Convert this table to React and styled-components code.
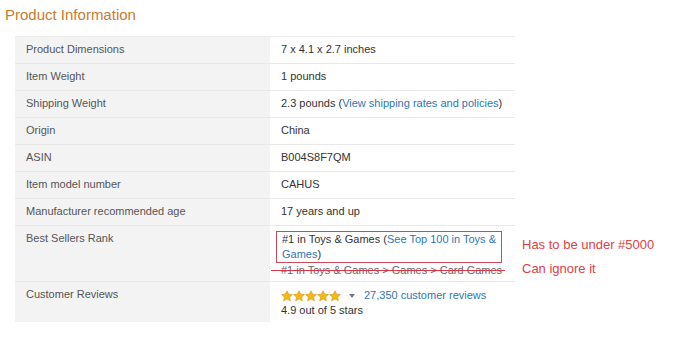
import React from 'react'
import styled, { createGlobalStyle } from 'styled-components'

const GlobalStyle = createGlobalStyle`
  html, body {
    margin: 0;
    background: #fff;
    font-family: "Liberation Sans", Arial, sans-serif;
  }
`

const rows = [
  ['Product Dimensions', '7 x 4.1 x 2.7 inches'],
  ['Item Weight', '1 pounds'],
  ['Shipping Weight', 'shipping'],
  ['Origin', 'China'],
  ['ASIN', 'B004S8F7QM'],
  ['Item model number', 'CAHUS'],
  ['Manufacturer recommended age', '17 years and up'],
]

function Star() {
  return (
    <svg width="12" height="12" viewBox="0 0 24 24">
      <path
        d="M12 1.5l3.2 6.9 7.5.8-5.6 5.1 1.6 7.4L12 17.9l-6.7 3.8 1.6-7.4L1.3 9.2l7.5-.8z"
        fill="#f5b81c"
        stroke="#d8920a"
        strokeWidth="1.2"
      />
    </svg>
  )
}

function App() {
  return (
    <Page>
      <GlobalStyle />
      <Title>Product Information</Title>
      <Table>
        {rows.map(([label, value]) => (
          <Row key={label}>
            <Label>{label}</Label>
            <Value>
              {value === 'shipping' ? (
                <>2.3 pounds (<Link>View shipping rates and policies</Link>)</>
              ) : value}
            </Value>
          </Row>
        ))}
        <Row>
          <Label>Best Sellers Rank</Label>
          <Value tight>
            <RankBox>
              #1 in Toys &amp; Games (<Link>See Top 100 in Toys &amp; Games</Link>)
            </RankBox>
            <Struck>#1 in Toys &amp; Games &gt; Games &gt; Card Games</Struck>
            <Note top={11}>Has to be under #5000</Note>
            <Note top={35}>Can ignore it</Note>
          </Value>
        </Row>
        <Row last>
          <Label>Customer Reviews</Label>
          <Value tight>
            <Reviews>
              <Stars>
                <Star /><Star /><Star /><Star /><Star />
              </Stars>
              <Caret />
              <Link>27,350 customer reviews</Link>
            </Reviews>
            <div>4.9 out of 5 stars</div>
          </Value>
        </Row>
      </Table>
    </Page>
  )
}

export default App

const Page = styled.div`
  padding: 5px 0 0 0;
  width: 680px;
  height: 339px;
  box-sizing: border-box;
`
const Title = styled.h2`
  margin: 0 0 0 5px;
  font-size: 15px;
  font-weight: normal;
  color: #c97a30;
  line-height: 19px;
`
const Table = styled.div`
  margin: 12px 0 0 15px;
  width: 500px;
  border-top: 1px solid #ececec;
`
const Row = styled.div`
  display: grid;
  grid-template-columns: 255px 245px;
  border-bottom: 1px solid ${p => (p.last ? 'transparent' : '#e8e8e8')};
  font-size: 11px;
  line-height: 15px;
`
const Label = styled.div`
  background: #f3f3f3;
  color: #555;
  padding: 5px 11px 6px 11px;
`
const Value = styled.div`
  position: relative;
  color: #333;
  padding: ${p => (p.tight ? '5px 11px 4px 11px' : '5px 11px 6px 11px')};
`
const Link = styled.span`
  color: #2e76b5;
`
const RankBox = styled.div`
  border: 1px solid #d2485a;
  margin: 0 0 0 -5px;
  padding: 0 5px;
  width: 214px;
`
const Struck = styled.div`
  position: relative;
  margin: 0;
  line-height: 14px;
  color: #666;
  &::after {
    content: '';
    position: absolute;
    left: -10px;
    width: 234px;
    top: 7px;
    border-top: 1px solid #d93a4a;
  }
`
const Note = styled.div`
  position: absolute;
  left: 252px;
  top: ${p => p.top}px;
  color: #e04048;
  font-size: 13px;
  white-space: nowrap;
`
const Reviews = styled.div`
  display: flex;
  align-items: center;
  margin-top: 1px;
`
const Stars = styled.div`
  display: flex;
  gap: 0;
`
const Caret = styled.span`
  margin: 0 9px 0 8px;
  width: 0;
  height: 0;
  border-left: 3px solid transparent;
  border-right: 3px solid transparent;
  border-top: 4px solid #777;
`
